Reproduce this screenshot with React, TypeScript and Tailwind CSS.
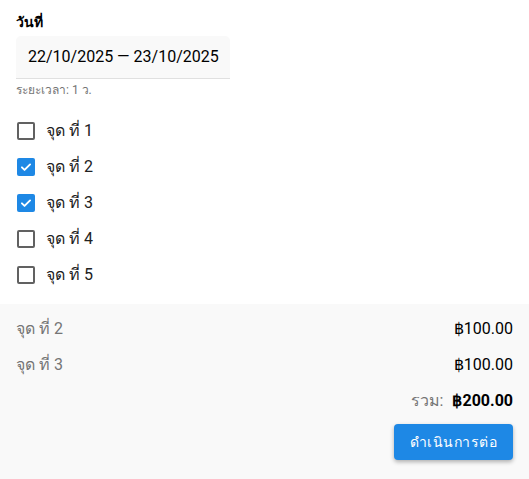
import React, { useState } from 'react';

const jud = [1, 2, 3, 4, 5];

const CheckIcon = () => (
    <svg viewBox="0 0 24 24" className="w-[14px] h-[14px]" fill="none" stroke="white" strokeWidth={3.2} strokeLinecap="round" strokeLinejoin="round">
        <path d="M5 12.5l4.5 4.5L19 7.5" />
    </svg>
);

export default function App() {
    const [selected, setSelected] = useState<number[]>([2, 3]);

    const toggle = (n: number) =>
        setSelected(s => (s.includes(n) ? s.filter(x => x !== n) : [...s, n].sort()));

    const total = selected.length * 100;

    return (
        <div className="w-[529px] h-[479px] bg-white flex flex-col font-['Roboto','Noto_Sans',sans-serif] text-[#212121]">
            {/* วันที่ */}
            <div className="px-4 pt-[13px]">
                <div className="text-[14px] font-bold leading-[18px] text-black">วันที่</div>
                <div className="mt-[5px] w-[214px] h-[43px] bg-[#f9f9f9] rounded-t-[5px] border-b border-[#e0e0e0] flex items-center pl-[12px] text-[16px] text-black">
                    22/10/2025 — 23/10/2025
                </div>
                <div className="mt-[3px] text-[12px] leading-[16px] text-[#757575]">ระยะเวลา: 1 ว.</div>
            </div>

            {/* รายการจุด */}
            <div className="px-4 pt-[15px] flex flex-col">
                {jud.map(n => {
                    const on = selected.includes(n);
                    return (
                        <button key={n} onClick={() => toggle(n)} className="h-[36px] flex items-center gap-[11px] text-left">
                            <span
                                className={
                                    on
                                        ? 'w-[18px] h-[18px] ml-[1px] rounded-[2px] bg-[#1e88e5] flex items-center justify-center'
                                        : 'w-[18px] h-[18px] ml-[1px] rounded-[2px] border-2 border-[#616161] bg-white'
                                }
                            >
                                {on && <CheckIcon />}
                            </span>
                            <span className="text-[16px] text-[#212121]">จุด ที่ {n}</span>
                        </button>
                    );
                })}
            </div>

            {/* สรุป */}
            <div className="mt-[11px] flex-1 bg-[#f9f9f9] px-4 pt-[7px]">
                {selected.map(n => (
                    <div key={n} className="h-[36px] flex items-center justify-between text-[16px]">
                        <span className="text-[#757575]">จุด ที่ {n}</span>
                        <span className="text-black">฿100.00</span>
                    </div>
                ))}
                <div className="h-[36px] flex items-center justify-end gap-[9px] text-[16px]">
                    <span className="text-[#757575]">รวม:</span>
                    <span className="font-bold text-black">฿{total}.00</span>
                </div>
                <div className="flex justify-end mt-[5px]">
                    <button className="h-[36px] px-[16px] rounded-[4px] bg-[#1e88e5] text-white text-[14px] font-medium tracking-[0.5px] shadow-[0_2px_4px_rgba(0,0,0,0.3)]">
                        ดำเนินการต่อ
                    </button>
                </div>
            </div>
        </div>
    );
}
